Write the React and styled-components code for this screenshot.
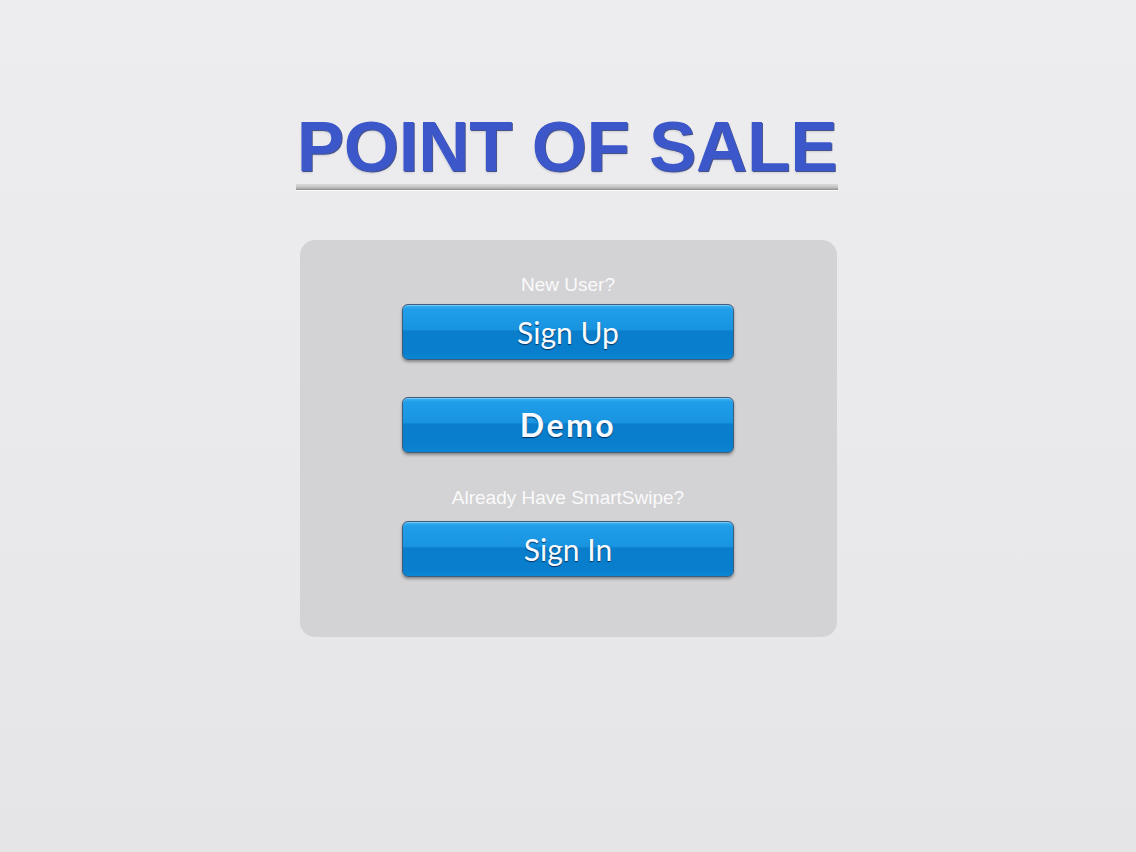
import React from "react";
import styled, { createGlobalStyle } from "styled-components";

const GlobalStyle = createGlobalStyle`
  html, body {
    margin: 0;
    padding: 0;
  }
  body {
    min-height: 852px;
    background: linear-gradient(180deg, #ededef 0%, #e9e9eb 60%, #e5e4e7 100%);
    font-family: "Liberation Sans", Arial, sans-serif;
  }
`;

const Page = styled.div`
  display: flex;
  flex-direction: column;
  align-items: center;
  padding-top: 111px;
`;

const Header = styled.div`
  display: flex;
  flex-direction: column;
  align-items: stretch;
  width: 542px;
  margin-left: -2px;
`;

const Title = styled.h1`
  margin: 0;
  font-family: "Liberation Sans", Arial, sans-serif;
  font-weight: 700;
  font-size: 71px;
  line-height: 1;
  letter-spacing: -0.3px;
  color: #3c57ca;
  text-align: center;
  white-space: nowrap;
  text-shadow: 1px 1px 0 rgba(25, 40, 110, 0.75), 0 2px 2px rgba(30, 40, 90, 0.15);
`;

const Rule = styled.div`
  height: 6px;
  margin-top: 2px;
  background: linear-gradient(180deg, #dadada 0%, #c2c2c2 55%, #8e8e8e 100%);
  box-shadow: 0 1px 0 rgba(255, 255, 255, 0.7);
`;

const Panel = styled.div`
  margin-top: 50px;
  width: 537px;
  height: 397px;
  box-sizing: border-box;
  border-radius: 15px;
  background: #d3d2d4;
  display: flex;
  flex-direction: column;
  align-items: center;
  padding-top: 34px;
`;

const Prompt = styled.div`
  font-size: 19px;
  line-height: 22px;
  color: #fafafb;
  margin-top: ${(p) => p.$top || 0}px;
  margin-bottom: ${(p) => p.$bottom || 8}px;
`;

const Button = styled.button`
  width: 332px;
  height: 56px;
  margin-top: ${(p) => p.$top || 0}px;
  padding: 0;
  border: 1px solid #3f5c78;
  border-radius: 6px;
  background: linear-gradient(
    180deg,
    #3cb0f0 0%,
    #209ee9 8%,
    #1893e0 46%,
    #0a7ecb 48%,
    #087ecc 85%,
    #0c86d4 100%
  );
  box-shadow: 0 2px 3px rgba(0, 0, 0, 0.35),
    inset 0 1px 0 rgba(140, 210, 255, 0.7);
  color: #f7fbff;
  font-family: Lato, "Open Sans", sans-serif;
  font-size: ${(p) => (p.$bold ? 32 : 30)}px;
  font-weight: ${(p) => (p.$bold ? 700 : 400)};
  letter-spacing: ${(p) => (p.$bold ? "2.5px" : "0")};
  line-height: 1;
  text-shadow: 0 1px 1px rgba(0, 30, 70, 0.8);
  cursor: pointer;
  display: flex;
  align-items: center;
  justify-content: center;
`;

export default function App() {
  return (
    <>
      <GlobalStyle />
      <Page>
        <Header>
          <Title>POINT OF SALE</Title>
          <Rule />
        </Header>
        <Panel>
          <Prompt>New User?</Prompt>
          <Button>Sign Up</Button>
          <Button $top={37} $bold>
            Demo
          </Button>
          <Prompt $top={34} $bottom={12}>
            Already Have SmartSwipe?
          </Prompt>
          <Button>Sign In</Button>
        </Panel>
      </Page>
    </>
  );
}
